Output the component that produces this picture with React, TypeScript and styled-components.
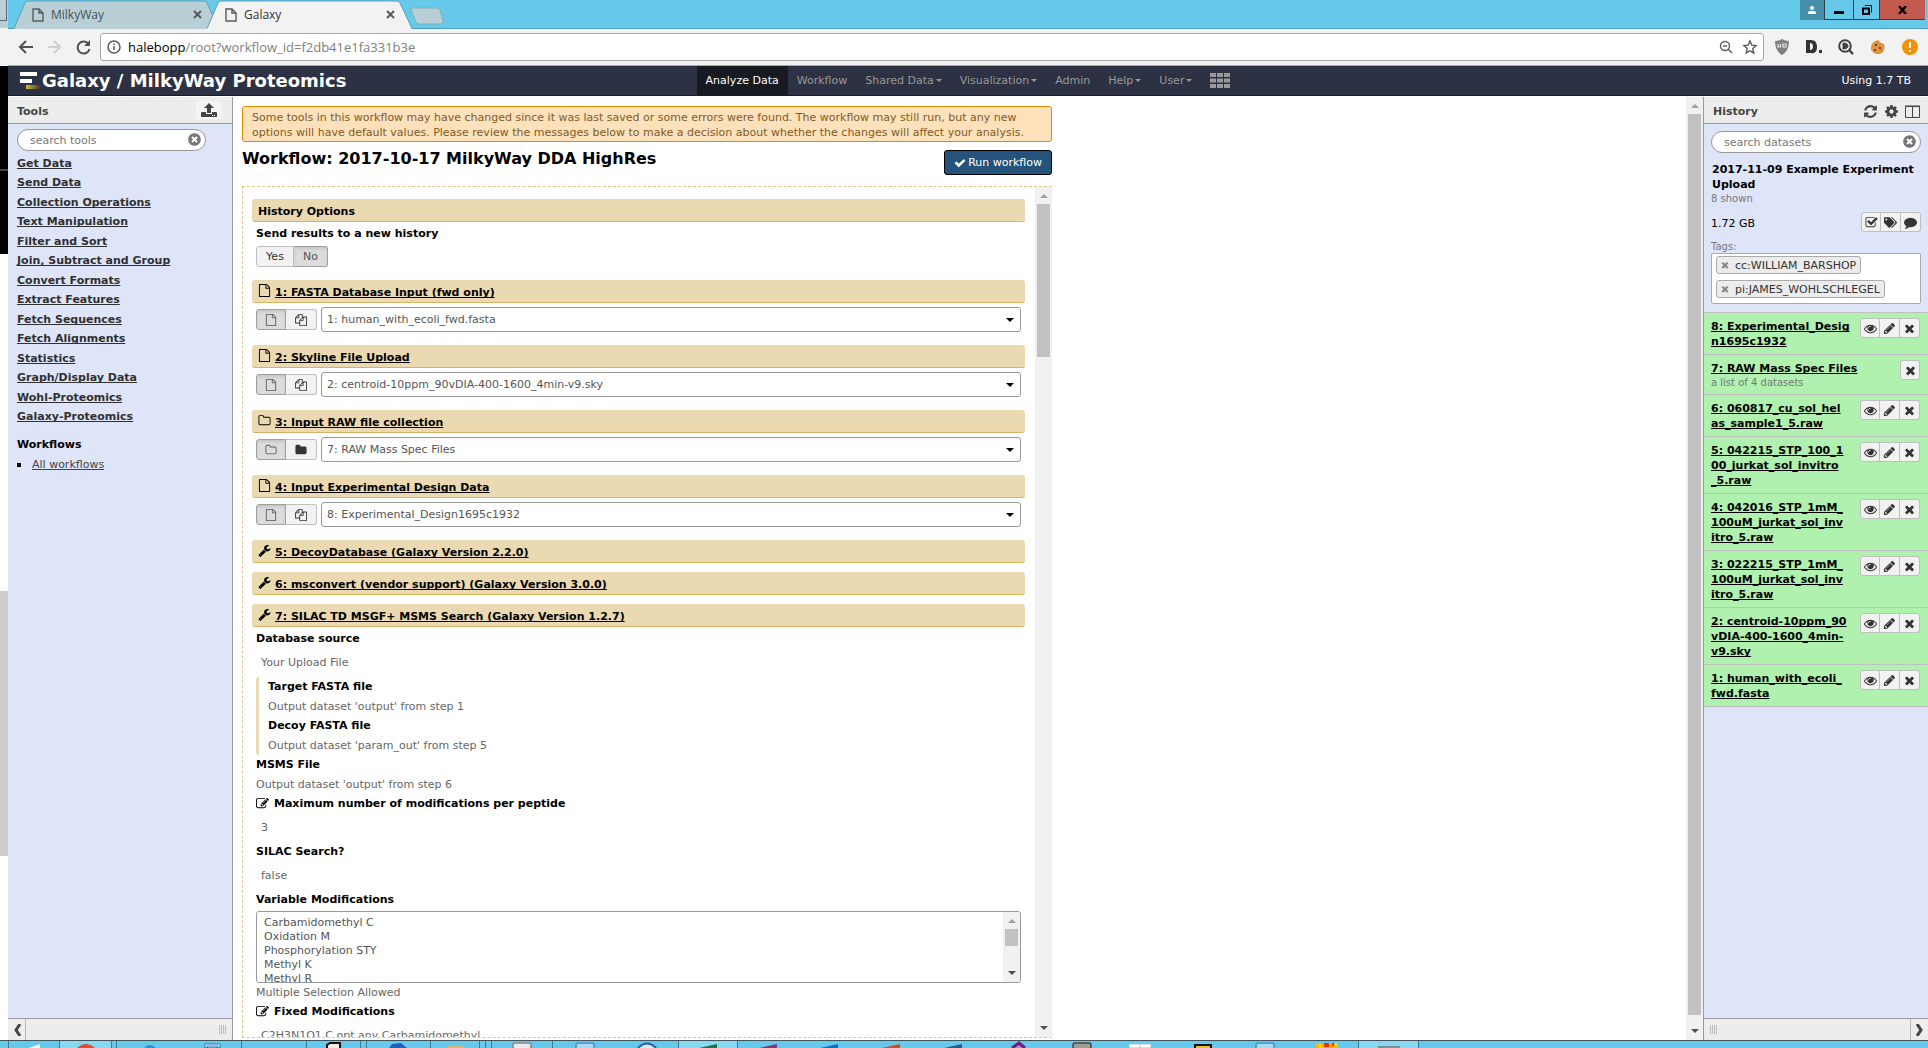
import React from "react";
import styled, { createGlobalStyle, css } from "styled-components";
import { FaTags, FaTimesCircle } from "react-icons/fa";

const GlobalStyle = createGlobalStyle`
  * { box-sizing: border-box; }
  body { margin: 0; overflow: hidden; background: #fff; }
  body, button, input, select {
    font-family: "DejaVu Sans", Verdana, sans-serif;
    font-size: 11px;
  }
  a { color: inherit; text-decoration-skip-ink: none; }
  svg { display: block; flex: none; }
  ul, h1, h2, h3, p { margin: 0; padding: 0; }
  ul { list-style: none; }
`;

/* ---------- icons ---------- */

const glyphs = {
  file: "M1596 380q28 28 48 76t20 88v1152q0 40-28 68t-68 28h-1344q-40 0-68-28t-28-68v-1600q0-40 28-68t68-28h896q40 0 88 20t76 48zm-444-244v376h376q-10-29-22-41l-313-313q-12-12-41-22zm384 1528v-1024h-416q-40 0-68-28t-28-68v-416h-768v1536h1280z",
  files: "M1696 384q40 0 68 28t28 68v1216q0 40-28 68t-68 28h-960q-40 0-68-28t-28-68v-288h-544q-40 0-68-28t-28-68v-672q0-40 20-88t48-76l408-408q28-28 76-48t88-20h416q40 0 68 28t28 68v328q68-40 128-40h416zm-544 213l-299 299h299v-299zm-640-384l-299 299h299v-299zm196 647l316-316v-416h-384v416q0 40-28 68t-68 28h-416v640h512v-256q0-40 20-88t48-76zm956 804v-1152h-384v416q0 40-28 68t-68 28h-416v640h896z",
  folderOpen: "M1600 1312v-704q0-40-28-68t-68-28h-704q-40 0-68-28t-28-68v-64q0-40-28-68t-68-28h-320q-40 0-68 28t-28 68v960q0 40 28 68t68 28h1216q40 0 68-28t28-68zm128-704v704q0 92-66 158t-158 66h-1216q-92 0-158-66t-66-158v-960q0-92 66-158t158-66h320q92 0 158 66t66 158v32h672q92 0 158 66t66 158z",
  folder: "M1728 608v704q0 92-66 158t-158 66h-1216q-92 0-158-66t-66-158v-960q0-92 66-158t158-66h320q92 0 158 66t66 158v32h672q92 0 158 66t66 158z",
  times: "M1490 1322q0 40-28 68l-136 136q-28 28-68 28t-68-28l-294-294-294 294q-28 28-68 28t-68-28l-136-136q-28-28-28-68t28-68l294-294-294-294q-28-28-28-68t28-68l136-136q28-28 68-28t68 28l294 294 294-294q28-28 68-28t68 28l136 136q28 28 28 68t-28 68l-294 294 294 294q28 28 28 68z",
  eye: "M1664 960q-152-236-381-353 61 104 61 225 0 185-131.5 316.5t-316.5 131.5-316.5-131.5-131.5-316.5q0-121 61-225-229 117-381 353 133 205 333.5 326.5t434.5 121.5 434.5-121.5 333.5-326.5zm-720-384q0-20-14-34t-34-14q-125 0-214.5 89.5t-89.5 214.5q0 20 14 34t34 14 34-14 14-34q0-86 61-147t147-61q20 0 34-14t14-34zm848 384q0 34-20 69-140 230-376.5 368.5t-499.5 138.5-499.5-139-376.5-368q-20-35-20-69t20-69q140-229 376.5-368t499.5-139 499.5 139 376.5 368q20 35 20 69z",
  pencil: "M491 1536l91-91-235-235-91 91v107h128v128h107zm523-928q0-22-22-22-10 0-17 7l-542 542q-7 7-7 17 0 22 22 22 10 0 17-7l542-542q7-7 7-17zm-54-192l416 416-832 832h-416v-416zm683 96q0 53-37 90l-166 166-416-416 166-165q36-38 90-38 53 0 91 38l235 234q37 39 37 91z",
  check: "M1671 566q0 40-28 68l-724 724-136 136q-28 28-68 28t-68-28l-136-136-362-362q-28-28-28-68t28-68l136-136q28-28 68-28t68 28l294 295 656-657q28-28 68-28t68 28l136 136q28 28 28 68z",
  wrench: "M448 1472q0-26-19-45t-45-19-45 19-19 45 19 45 45 19 45-19 19-45zm644-420l-682 682q-37 37-90 37-52 0-91-37l-106-108q-38-36-38-90 0-53 38-91l681-681q39 98 114.5 173.5t173.5 114.5zm634-435q0 39-23 106-47 134-164.5 217.5t-258.5 83.5q-185 0-316.5-131.5t-131.5-316.5 131.5-316.5 316.5-131.5q58 0 121.5 16.5t107.5 46.5q16 11 16 28t-16 28l-293 169v224l193 107q5-3 79-48.5t135.5-81 70.5-35.5q15 0 23.5 10t8.5 25z",
  cog: "M1152 896q0-106-75-181t-181-75-181 75-75 181 75 181 181 75 181-75 75-181zm512-109v222q0 12-8 23t-20 13l-185 28q-19 54-39 91 35 50 107 138 10 12 10 25t-9 23q-27 37-99 108t-94 71q-12 0-26-9l-138-108q-44 23-91 38-16 136-29 186-7 28-36 28h-222q-14 0-24.5-8.5t-11.5-21.5l-28-184q-49-16-90-37l-141 107q-10 9-25 9-14 0-25-11-126-114-165-168-7-10-7-23 0-12 8-23 15-21 51-66.5t54-70.5q-27-50-41-99l-183-27q-13-2-21-12.5t-8-23.5v-222q0-12 8-23t19-13l186-28q14-46 39-92-40-57-107-138-10-12-10-24 0-10 9-23 26-36 98.5-107.5t94.5-71.5q13 0 26 10l138 107q44-23 91-38 16-136 29-186 7-28 36-28h222q14 0 24.5 8.5t11.5 21.5l28 184q49 16 90 37l142-107q9-9 24-9 13 0 25 10 129 119 165 170 7 8 7 22 0 12-8 23-15 21-51 66.5t-54 70.5q26 50 41 98l183 28q13 2 21 12.5t8 23.5z",
  refresh: "M1639 1056q0 5-1 7-64 268-268 434.5t-478 166.5q-146 0-282.5-55t-243.5-157l-129 129q-19 19-45 19t-45-19-19-45v-448q0-26 19-45t45-19h448q26 0 45 19t19 45-19 45l-137 137q71 66 161 102t187 36q134 0 250-65t186-179q11-17 53-117 8-23 30-23h192q13 0 22.5 9.5t9.5 22.5zm25-800v448q0 26-19 45t-45 19h-448q-26 0-45-19t-19-45 19-45l138-138q-148-137-349-137-134 0-250 65t-186 179q-11 17-53 117-8 23-30 23h-199q-13 0-22.5-9.5t-9.5-22.5v-7q65-268 270-434.5t480-166.5q146 0 284 55.5t245 156.5l130-129q19-19 45-19t45 19 19 45z",
  comment: "M1792 896q0 174-120 321.5t-326 233-450 85.5q-70 0-145-8-198 175-460 242-49 14-114 22-17 2-30.5-9t-17.5-29v-1q-3-4-.5-12t2-10 4.5-9.5l6-9 7-8.5 8-9q7-8 31-34.5t34.5-38 31-39.5 32.5-51 27-59 26-76q-157-89-247.5-220t-90.5-281q0-130 71-248.5t191-204.5 286-136.5 348-50.5q244 0 450 85.5t326 233 120 321.5z",
  checkSquare: "M1472 930v318q0 119-84.5 203.5t-203.5 84.5h-832q-119 0-203.5-84.5t-84.5-203.5v-832q0-119 84.5-203.5t203.5-84.5h832q63 0 117 25 15 7 18 23 3 17-9 29l-49 49q-10 10-23 10-3 0-9-2-23-6-45-6h-832q-66 0-113 47t-47 113v832q0 66 47 113t113 47h832q66 0 113-47t47-113v-254q0-13 9-22l64-64q10-10 23-10 6 0 12 3 20 8 20 29zm231-489l-814 814q-24 24-57 24t-57-24l-430-430q-24-24-24-57t24-57l110-110q24-24 57-24t57 24l263 263 647-647q24-24 57-24t57 24l110 110q24 24 24 57t-24 57z",
  edit: "M888 1184l116-116-152-152-116 116v56h96v96h56zm440-720q-16-16-33 1l-350 350q-17 17-1 33t33-1l350-350q17-17 1-33zm80 594v190q0 119-84.5 203.5t-203.5 84.5h-832q-119 0-203.5-84.5t-84.5-203.5v-832q0-119 84.5-203.5t203.5-84.5h832q63 0 117 25 15 7 18 23 3 17-9 29l-49 49q-14 14-32 8-23-6-45-6h-832q-66 0-113 47t-47 113v832q0 66 47 113t113 47h832q66 0 113-47t47-113v-126q0-13 9-22l64-64q15-15 35-7t20 29zm-96-738l288 288-672 672h-288v-288zm444 132l-92 92-288-288 92-92q28-28 68-28t68 28l152 152q28 28 28 68t-28 68z",
};

type GlyphName = keyof typeof glyphs;

const Glyph = ({ name, size = 12 }: { name: GlyphName; size?: number }) => (
  <svg width={size} height={size} viewBox="0 0 1792 1792" fill="currentColor" aria-hidden>
    <path d={glyphs[name]} />
  </svg>
);

const Triangle = ({ down, color }: { down?: boolean; color: string }) => (
  <svg width="8" height="4" viewBox="0 0 8 4" aria-hidden>
    <path d={down ? "M0 0h8l-4 4z" : "M0 4h8l-4-4z"} fill={color} />
  </svg>
);

const PageIcon = () => (
  <svg width="12" height="14" viewBox="0 0 12 14" fill="none" stroke="#5a5a5a" strokeWidth="1.4" aria-hidden>
    <path d="M1 1h6l4 4v8H1zM7 1v4h4" />
  </svg>
);

const CloseIcon = () => (
  <svg width="9" height="9" viewBox="0 0 9 9" stroke="#555" strokeWidth="1.8" aria-hidden>
    <path d="M1 1l7 7M8 1L1 8" />
  </svg>
);

/* ---------- desktop ---------- */

const Screen = styled.div`
  display: flex;
  flex-direction: column;
  height: 100vh;
  overflow: hidden;
`;

const Desktop = styled.div`
  display: flex;
  flex: 1;
  min-height: 0;
`;

const BehindWindow = styled.div`
  display: flex;
  flex-direction: column;
  width: 8px;
  flex: none;
  background: #fff;
`;

const BehindBlock = styled.div<{ $h: number; $bg: string }>`
  flex: none;
  height: ${(p) => p.$h}px;
  background: ${(p) => p.$bg};
`;

const BehindTab = styled.div`
  flex: none;
  height: 28px;
  background: #b9cfd6;
  &::before {
    content: "";
    display: block;
    width: 6px;
    height: 20px;
    border: 1px solid #5b6a70;
    border-width: 0 1px 1px 0;
  }
`;

const Browser = styled.div`
  display: flex;
  flex-direction: column;
  flex: 1;
  min-width: 0;
`;

/* ---------- browser chrome ---------- */

const TabStrip = styled.div`
  display: flex;
  align-items: flex-start;
  flex: none;
  height: 29px;
  padding-left: 6px;
  background: #66c9e9;
  border-bottom: 1px solid #4f9cb8;
`;

const BrowserTab = styled.div<{ $active?: boolean }>`
  position: relative;
  z-index: ${(p) => (p.$active ? 1 : 0)};
  display: flex;
  align-items: center;
  width: 205px;
  height: 29px;
  margin-right: -12px;
  padding: 0 17px 0 18px;
  font-family: "Open Sans", sans-serif;
  font-size: 12px;
  color: ${(p) => (p.$active ? "#333" : "#41555c")};
  > svg { position: absolute; left: 0; top: 0; }
`;

const TabBody = styled.div`
  position: relative;
  display: flex;
  align-items: center;
  gap: 7px;
  flex: 1;
  button { margin-left: auto; }
`;

const PlainButton = styled.button`
  display: flex;
  align-items: center;
  justify-content: center;
  padding: 0;
  border: 0;
  background: none;
  color: #333;
`;

const NewTab = styled(PlainButton)`
  margin: 7px 0 0 10px;
`;

const WindowControls = styled.div`
  display: flex;
  margin-left: auto;
  padding-right: 3px;
`;

const WindowButton = styled(PlainButton)<{ $w: number; $bg?: string; $plain?: boolean }>`
  width: ${(p) => p.$w}px;
  height: 20px;
  background: ${(p) => p.$bg ?? "#66c9e9"};
  ${(p) =>
    !p.$plain &&
    css`
      border: 1px solid #27424c;
      border-width: 0 0 1px 1px;
    `}
`;

const Toolbar = styled.div`
  display: flex;
  align-items: center;
  flex: none;
  height: 37px;
  padding: 0 10px;
  background: #f2f2f2;
  border-bottom: 1px solid #a9a9a9;
`;

const NavButtons = styled.div`
  display: flex;
  gap: 14px;
  width: 82px;
`;

const AddressBar = styled.div`
  display: flex;
  align-items: center;
  flex: 1;
  height: 28px;
  padding: 0 5px 0 6px;
  gap: 7px;
  background: #fff;
  border: 1px solid #a9a9a9;
  border-radius: 3px;
  font-family: "Open Sans", sans-serif;
  font-size: 13px;
  line-height: 20px;
  color: #000;
  span { color: #808080; }
  p { flex: 1; }
`;

const Extensions = styled.div`
  display: flex;
  gap: 16px;
  padding-left: 10px;
`;

/* ---------- masthead ---------- */

const Masthead = styled.header`
  display: grid;
  grid-template-columns: 1fr auto 1fr;
  align-items: center;
  flex: none;
  height: 30px;
  margin-bottom: 1px;
  background: #2c3143;
  border-bottom: 1px solid #191b24;
  color: #fff;
`;

const Brand = styled.h1`
  display: flex;
  align-items: center;
  gap: 1px;
  padding-left: 11px;
  font-size: 18px;
  font-weight: bold;
  line-height: 28px;
`;

const MainNav = styled.nav`
  display: flex;
  align-self: stretch;
`;

const NavLink = styled.a<{ $active?: boolean }>`
  display: flex;
  align-items: center;
  gap: 2px;
  padding: 0 9px;
  text-decoration: none;
  color: ${(p) => (p.$active ? "#fff" : "#999")};
  background: ${(p) => (p.$active ? "#181a22" : "none")};
`;

const Quota = styled.div`
  padding-right: 17px;
  text-align: right;
`;

/* ---------- side panels ---------- */

const Workspace = styled.div`
  display: flex;
  flex: 1;
  min-height: 0;
`;

const SidePanel = styled.aside<{ $side: "left" | "right" }>`
  display: flex;
  flex-direction: column;
  flex: none;
  width: 225px;
  background: #dfe5f9;
  border-${(p) => (p.$side === "left" ? "right" : "left")}: 1px solid #999;
`;

const PanelHeader = styled.div`
  display: flex;
  align-items: center;
  justify-content: space-between;
  flex: none;
  height: 27px;
  padding: 3px 8px 0 9px;
  background: #ededed;
  border-bottom: 1px solid #999;
  color: #444;
  h2 { font-size: 11px; }
`;

const HeaderTools = styled.div`
  display: flex;
  gap: 6px;
  button { color: #444; }
`;

const UploadButton = styled(PlainButton)`
  width: 26px;
  height: 18px;
  margin: 0 2px 4px 0;
  background: #f4f4f4;
  border-radius: 3px;
`;

const PanelBody = styled.div`
  flex: 1;
  min-height: 0;
  overflow: hidden;
`;

const PanelFooter = styled.div<{ $side: "left" | "right" }>`
  display: flex;
  align-items: center;
  justify-content: space-between;
  flex-direction: ${(p) => (p.$side === "left" ? "row" : "row-reverse")};
  flex: none;
  height: 22px;
  background: #ededed;
  border-top: 1px solid #999;
`;

const CollapseButton = styled(PlainButton)<{ $side: "left" | "right" }>`
  width: 18px;
  align-self: stretch;
  border-${(p) => (p.$side === "left" ? "right" : "left")}: 1px solid #bbb;
`;

const Grip = styled.div`
  width: 7px;
  height: 9px;
  margin: 0 6px;
  border: 1px solid #bbb;
  border-width: 0 1px;
  background: linear-gradient(90deg, #ededed 1px, #bbb 1px 2px, #ededed 2px 3px, #bbb 3px 4px, #ededed 4px);
`;

const SearchBox = styled.div`
  position: relative;
  display: flex;
  input {
    width: 100%;
    height: 22px;
    padding: 0 12px;
    border: 1px solid #999;
    border-radius: 11px;
    background: #fff;
    outline: 0;
  }
  input::placeholder { color: #777; opacity: 1; }
  button {
    position: absolute;
    right: 5px;
    top: 4px;
    color: #777;
  }
`;

const ToolsBody = styled(PanelBody)`
  padding: 5px 26px 0 9px;
`;

const ToolList = styled.ul`
  padding-top: 3px;
  color: #303030;
  font-weight: bold;
  li { height: 20px; line-height: 20px; }
  li:nth-child(odd) { height: 19px; }
`;

const WorkflowHeading = styled.h3`
  margin-top: 8px;
  font-size: 11px;
  line-height: 20px;
`;

const WorkflowList = styled.ul`
  li {
    display: flex;
    align-items: center;
    gap: 11px;
    line-height: 20px;
    color: #444;
  }
  li::before {
    content: "";
    width: 4px;
    height: 4px;
    background: #000;
  }
`;

/* ---------- history ---------- */

const HistorySummary = styled.section`
  padding: 7px 7px 8px 7px;
  border-bottom: 1px solid #bfbfbf;
`;

const HistoryName = styled.h3`
  margin-top: 9px;
  padding-left: 1px;
  font-size: 11px;
  line-height: 15px;
`;

const SmallText = styled.div`
  font-size: 10px;
  line-height: 13px;
  color: #777;
`;

const SizeRow = styled.div`
  display: flex;
  align-items: flex-end;
  justify-content: space-between;
  margin: 7px 0 8px;
  line-height: 17px;
`;

const ButtonGroup = styled.div`
  display: flex;
  flex: none;
  align-self: flex-start;
  button + button { border-left-width: 0; }
  button:first-child { border-radius: 3px 0 0 3px; }
  button:last-child { border-radius: 0 3px 3px 0; }
  button:only-child { border-radius: 3px; }
`;

const SmallButton = styled(PlainButton)`
  width: 20px;
  height: 20px;
  background: #f2f2f2;
  border: 1px solid #bfbfbf;
`;

const TagBox = styled.div`
  display: flex;
  flex-direction: column;
  align-items: flex-start;
  gap: 6px;
  height: 51px;
  padding: 2px 4px;
  background: #fff;
  border: 1px solid #aaa;
  border-radius: 2px;
`;

const Tag = styled.span`
  display: flex;
  align-items: center;
  gap: 5px;
  height: 18px;
  padding: 0 4px 0 3px;
  border: 1px solid #aaa;
  border-radius: 3px;
  background: #ececec;
  color: #333;
  button { color: #888; }
`;

const Dataset = styled.li`
  display: flex;
  justify-content: space-between;
  padding: 5px 8px 5px 7px;
  background: #b0f1b0;
  border-bottom: 1px solid #bfbfbf;
`;

const DatasetTitle = styled.div`
  padding-top: 1px;
  line-height: 15px;
  white-space: nowrap;
  a { font-weight: bold; color: #000; }
`;

/* ---------- centre ---------- */

const Center = styled.main`
  display: flex;
  flex: 1;
  min-width: 0;
`;

const CenterPane = styled.div`
  display: flex;
  flex-direction: column;
  flex: 1;
  min-width: 0;
  padding: 9px 9px 2px;
`;

const ScrollTrack = styled.div`
  display: flex;
  flex-direction: column;
  align-items: center;
  flex: none;
  width: 17px;
  padding: 7px 0;
  background: #f1f1f1;
`;

const Thumb = styled.div<{ $size?: number }>`
  width: 13px;
  margin: 6px 0 auto;
  background: #c1c1c1;
  ${(p) => (p.$size ? `height: ${p.$size}px;` : "flex: 1; margin-bottom: 14px;")}
`;

const Warning = styled.div`
  width: 810px;
  max-width: 100%;
  height: 36px;
  padding: 3px 9px;
  background: #fde1ba;
  border: 1px solid #e18700;
  border-radius: 3px;
  color: #7d5b29;
  line-height: 15px;
`;

const TitleRow = styled.div`
  display: flex;
  justify-content: space-between;
  width: 810px;
  max-width: 100%;
  padding: 8px 0 11px;
  h2 { font-size: 16px; line-height: 18px; }
`;

const RunButton = styled.button`
  display: flex;
  align-items: center;
  gap: 2px;
  height: 25px;
  padding: 0 9px;
  background: #25537b;
  border: 1px solid #000;
  border-radius: 3px;
  color: #fff;
`;

const FormFrame = styled.form`
  display: flex;
  flex: 1;
  min-height: 0;
  width: 810px;
  max-width: 100%;
  border: 1px dashed #e0c98f;
  border-right: 0;
`;

const FormBody = styled.div`
  flex: 1;
  min-width: 0;
  overflow: hidden;
  padding: 12px 10px 0 9px;
`;

const StepTitle = styled.h3`
  display: flex;
  align-items: center;
  gap: 4px;
  height: 23px;
  padding: 2px 6px 0;
  background: #ebd9b2;
  border-bottom: 1px solid #d8b365;
  border-radius: 3px;
  font-size: 11px;
  svg { margin-top: -3px; }
`;

const Step = styled.section<{ $gap: number }>`
  margin-bottom: ${(p) => p.$gap}px;
`;

const Fields = styled.div`
  padding: 2px 4px 0;
`;

const FieldLabel = styled.label`
  display: flex;
  align-items: center;
  gap: 5px;
  height: 20px;
  padding-bottom: 2px;
  font-weight: bold;
`;

const FieldText = styled.div<{ $boxed?: boolean }>`
  height: ${(p) => (p.$boxed ? 28 : 19)}px;
  line-height: ${(p) => (p.$boxed ? 28 : 19)}px;
  padding-left: ${(p) => (p.$boxed ? 5 : 0)}px;
  color: #666;
`;

const Nested = styled.div`
  height: 78px;
  padding-left: 9px;
  border-left: 3px solid #ebd9b2;
  border-radius: 3px;
`;

const ToggleButton = styled.button<{ $on?: boolean; $w: number }>`
  display: flex;
  align-items: center;
  justify-content: center;
  width: ${(p) => p.$w}px;
  height: 21px;
  padding: 0;
  border: 1px solid ${(p) => (p.$on ? "#a0a0a0" : "#bfbfbf")};
  background: ${(p) => (p.$on ? "#dcdcdc" : "#f2f2f2")};
  box-shadow: ${(p) => (p.$on ? "inset 0 2px 3px #c6c6c6" : "none")};
  color: ${(p) => (p.$on ? "#555" : "#333")};
`;

const ToggleRow = styled.div`
  display: flex;
  padding-top: 2px;
`;

const InputRow = styled.div`
  display: flex;
  align-items: center;
  gap: 4px;
  padding: 4px 4px 0;
  ${ButtonGroup} { align-self: center; }
`;

const SelectWrap = styled.div`
  position: relative;
  flex: 1;
  select {
    display: block;
    appearance: none;
    width: 100%;
    height: 25px;
    padding: 0 5px;
    border: 1px solid #999;
    border-radius: 3px;
    background: #fff;
    color: #555;
  }
  svg { position: absolute; right: 7px; top: 11px; }
`;

const MultiWrap = styled.div`
  display: flex;
  height: 72px;
  margin-top: 1px;
  border: 1px solid #999;
  border-radius: 3px;
  overflow: hidden;
  select {
    flex: 1;
    height: 70px;
    padding: 4px 7px 0;
    border: 0;
    outline: 0;
    overflow: hidden;
    background: #fff;
    color: #555;
    scrollbar-width: none;
  }
  option {
    height: 14px;
    min-height: 14px;
    padding: 0;
    line-height: 14px;
  }
`;

/* ---------- taskbar ---------- */

const Taskbar = styled.footer`
  display: flex;
  flex: none;
  height: 8px;
  overflow: hidden;
  background: #66c9e9;
  border-top: 1px solid #3c5660;
`;

const TaskItem = styled.div<{ $w: number; $lit?: boolean; $edge?: boolean }>`
  display: flex;
  justify-content: center;
  flex: none;
  width: ${(p) => p.$w}px;
  height: 7px;
  background: ${(p) => (p.$lit ? "#8ad8ef" : "none")};
  border-right: ${(p) => (p.$edge ? "1px solid #3d7c92" : "0")};
`;

type Task = { w: number; lit?: boolean; edge?: boolean; art?: React.ReactNode };

const peak = (color: string) => <path d="M2 7L20 3v4z" fill={color} />;
const cap = (fill: string, stroke: string) => (
  <path d="M2 7V4q0-2 2-2h14q2 0 2 2v3" fill={fill} stroke={stroke} strokeWidth="1.5" />
);

const tasks: Task[] = [
  { w: 9, edge: true },
  { w: 51, edge: true, art: <path d="M6 7L17 3v4z" fill="#f4fbfd" /> },
  { w: 52, lit: true, edge: true, art: <path d="M2 7q9-8 18 0z" fill="#e0483a" /> },
  { w: 5, edge: true },
  { w: 66, art: <path d="M5 7q6-6 12 0z" fill="#2e8fd0" /> },
  { w: 59, edge: true, art: <path d="M4 3h15v4H4zM6 5h11v2H6z" fill="#fff" stroke="#1173c0" /> },
  { w: 65, edge: true },
  { w: 54, edge: true, art: <path d="M4 7V4l3-2h10v5" fill="#eee" stroke="#111" strokeWidth="2" /> },
  { w: 6, edge: true },
  { w: 64, edge: true, art: <path d="M1 7l3-4 9-1 6 5z" fill="#1e5fc0" /> },
  { w: 49, edge: true, art: <path d="M3 7V5h16v2z" fill="#d8b878" /> },
  { w: 6, edge: true },
  { w: 6, edge: true },
  { w: 61, edge: true, art: cap("#e9e9e9", "#888") },
  { w: 63, art: cap("#a8d8f4", "#4a90c8") },
  { w: 63, edge: true, art: <path d="M2 7q9-9 18 0" fill="#d8ecf8" stroke="#2860a8" strokeWidth="2" /> },
  { w: 59, lit: true, edge: true, art: peak("#1e7145") },
  { w: 60, art: peak("#80397b") },
  { w: 61, art: peak("#0f6fc6") },
  { w: 63, art: peak("#d24726") },
  { w: 62, art: peak("#2b579a") },
  { w: 70, art: <path d="M4 7l7-5 6 5" fill="#b58ac4" stroke="#68217a" strokeWidth="3" /> },
  { w: 55, art: cap("#a09c94", "#444") },
  { w: 62, art: <path d="M0 3h22v4H0zM11 4v3" fill="#fff" stroke="#bbb" /> },
  { w: 64, art: <path d="M3 7V4h16v3" fill="#e8c020" stroke="#111" strokeWidth="2" /> },
  { w: 60, art: cap("#a8d8f4", "#4a90c8") },
  {
    w: 64,
    edge: true,
    art: (
      <>
        <path d="M0 2h22v5H0z" fill="#ffb000" />
        <path d="M8 2h5v4H8zM16 2h2v3h-2z" fill="#f03000" />
        <path d="M3 3h2v4H3zM19 2h2v3h-2z" fill="#ffe800" />
      </>
    ),
  },
  { w: 60, lit: true, edge: true, art: <path d="M0 5h22v2H0z" fill="#7a8d94" /> },
];

/* ---------- data ---------- */

const toolSections = [
  "Get Data", "Send Data", "Collection Operations", "Text Manipulation", "Filter and Sort",
  "Join, Subtract and Group", "Convert Formats", "Extract Features", "Fetch Sequences",
  "Fetch Alignments", "Statistics", "Graph/Display Data", "Wohl-Proteomics", "Galaxy-Proteomics",
];

const inputs: { title: string; value: string; single: GlyphName; many: GlyphName }[] = [
  { title: "1: FASTA Database Input (fwd only)", value: "1: human_with_ecoli_fwd.fasta", single: "file", many: "files" },
  { title: "2: Skyline File Upload", value: "2: centroid-10ppm_90vDIA-400-1600_4min-v9.sky", single: "file", many: "files" },
  { title: "3: Input RAW file collection", value: "7: RAW Mass Spec Files", single: "folderOpen", many: "folder" },
  { title: "4: Input Experimental Design Data", value: "8: Experimental_Design1695c1932", single: "file", many: "files" },
];

const datasets: { lines: string[]; note?: string }[] = [
  { lines: ["8: Experimental_Desig", "n1695c1932"] },
  { lines: ["7: RAW Mass Spec Files"], note: "a list of 4 datasets" },
  { lines: ["6: 060817_cu_sol_hel", "as_sample1_5.raw"] },
  { lines: ["5: 042215_STP_100_1", "00_jurkat_sol_invitro", "_5.raw"] },
  { lines: ["4: 042016_STP_1mM_", "100uM_jurkat_sol_inv", "itro_5.raw"] },
  { lines: ["3: 022215_STP_1mM_", "100uM_jurkat_sol_inv", "itro_5.raw"] },
  { lines: ["2: centroid-10ppm_90", "vDIA-400-1600_4min-", "v9.sky"] },
  { lines: ["1: human_with_ecoli_", "fwd.fasta"] },
];

const menu = [
  { label: "Analyze Data", active: true },
  { label: "Workflow" },
  { label: "Shared Data", caret: true },
  { label: "Visualization", caret: true },
  { label: "Admin" },
  { label: "Help", caret: true },
  { label: "User", caret: true },
];

/* ---------- pieces ---------- */

const ChromeTab = ({ title, active }: { title: string; active?: boolean }) => (
  <BrowserTab $active={active}>
    <svg width="205" height="29" viewBox="0 0 205 29" aria-hidden>
      <path d="M0 29L11 3q1-2 4-2h174q3 0 4 2l12 26z" fill={active ? "#f2f2f2" : "#b9cfd6"} />
      <path d="M0 28.5L11 3q1-2 4-2h174q3 0 4 2l12 25.500" fill="none" stroke="#5a9fb8" />
    </svg>
    <TabBody>
      <PageIcon />
      {title}
      <PlainButton aria-label={`Close ${title}`}><CloseIcon /></PlainButton>
    </TabBody>
  </BrowserTab>
);

const BrowserChrome = () => (
  <>
    <TabStrip>
      <ChromeTab title="MilkyWay" />
      <ChromeTab title="Galaxy" active />
      <NewTab aria-label="New tab">
        <svg width="34" height="18" viewBox="0 0 34 18">
          <path d="M1 1h26q2 0 3 2l3 11q1 3-2 3H9q-2 0-3-2L1 3z" fill="#b9cfd6" stroke="#7fb0c0" />
        </svg>
      </NewTab>
      <WindowControls>
        <WindowButton $w={24} $bg="#468fa8" $plain aria-label="Profile">
          <svg width="8" height="8" viewBox="0 0 8 8" fill="#fff"><circle cx="4" cy="2" r="2" /><path d="M0 8V7q0-2 2-2h4q2 0 2 2v1z" /></svg>
        </WindowButton>
        <WindowButton $w={29} aria-label="Minimize">
          <svg width="10" height="8" viewBox="0 0 10 8"><path d="M0 5h10v3H0z" /></svg>
        </WindowButton>
        <WindowButton $w={26} aria-label="Restore">
          <svg width="10" height="10" viewBox="0 0 10 10" fill="none" stroke="#000">
            <path d="M1 3.500h6v5.500H1z" strokeWidth="2" /><path d="M3 .5h6.500v7" />
          </svg>
        </WindowButton>
        <WindowButton $w={46} $bg="#c35a50" aria-label="Close window">
          <svg width="9" height="8" viewBox="0 0 9 8" stroke="#000" strokeWidth="2.400"><path d="M1 0l7 8M8 0L1 8" /></svg>
        </WindowButton>
      </WindowControls>
    </TabStrip>
    <Toolbar>
      <NavButtons>
        <PlainButton aria-label="Back">
          <svg width="16" height="14" viewBox="0 0 16 14" fill="none" stroke="#505050" strokeWidth="2"><path d="M15 7H2M8 1L2 7l6 6" /></svg>
        </PlainButton>
        <PlainButton aria-label="Forward">
          <svg width="14" height="14" viewBox="0 0 14 14" fill="none" stroke="#d0d0d0" strokeWidth="2"><path d="M0 7h12M6 1l6 6-6 6" /></svg>
        </PlainButton>
        <PlainButton aria-label="Reload">
          <svg width="15" height="15" viewBox="0 0 15 15" fill="none" stroke="#505050" strokeWidth="2">
            <path d="M12.500 4A6 6 0 1 0 13.500 9" /><path d="M14 0v6H8z" fill="#505050" stroke="none" />
          </svg>
        </PlainButton>
      </NavButtons>
      <AddressBar>
        <svg width="14" height="14" viewBox="0 0 14 14" fill="none" stroke="#5a5a5a" strokeWidth="1.500">
          <circle cx="7" cy="7" r="6" /><path d="M7 6v4M7 3.500V5" />
        </svg>
        <p>halebopp<span>/root?workflow_id=f2db41e1fa331b3e</span></p>
        <PlainButton aria-label="Zoom">
          <svg width="14" height="14" viewBox="0 0 14 14" fill="none" stroke="#606060" strokeWidth="1.500">
            <circle cx="6" cy="6" r="4.500" /><path d="M9 9l4 4M4 6h4" />
          </svg>
        </PlainButton>
        <PlainButton aria-label="Bookmark">
          <svg width="18" height="16" viewBox="0 0 18 16" fill="none" stroke="#555" strokeWidth="1.400">
            <path d="M10 2l1.800 4.200 4.200.4-3.200 3 1 4.400L10 11.700 6.200 14l1-4.400-3.200-3 4.200-.4z" />
          </svg>
        </PlainButton>
      </AddressBar>
      <Extensions>
        <PlainButton aria-label="Shield">
          <svg width="16" height="16" viewBox="0 0 16 16">
            <path d="M8 0q3 2 7 2 0 10-7 14Q1 12 1 2q4 0 7-2z" fill="#808080" />
            <path d="M4 5v3h2.500V5M9 5h3v3H9z" fill="none" stroke="#e8e8e8" strokeWidth="1.200" />
          </svg>
        </PlainButton>
        <PlainButton aria-label="Disconnect">
          <svg width="16" height="14" viewBox="0 0 16 14" fill="#333">
            <path fillRule="evenodd" d="M0 0h5q6 0 6 7t-6 6H0zM4 3v7q3 0 3-3.500T4 3z" /><path d="M13 10h3v3h-3z" />
          </svg>
        </PlainButton>
        <PlainButton aria-label="Lookup">
          <svg width="16" height="16" viewBox="0 0 16 16" fill="none" stroke="#404040">
            <circle cx="7" cy="7" r="5.800" strokeWidth="2" /><path d="M11 11l4 4" strokeWidth="2.400" /><path d="M5 4q5 0 5 3t-5 3z" fill="#404040" />
          </svg>
        </PlainButton>
        <PlainButton aria-label="Cookies">
          <svg width="16" height="16" viewBox="0 0 16 16">
            <path d="M8 1q2 3 6 4 2 6-3 9.500-7 2-10-4Q0 3 8 1z" fill="#dd9440" />
            <path d="M5 5h2v2H5zM9 8h2v2H9zM4 10h2v2H4zM11 11h1v1h-1z" fill="#7a4010" />
          </svg>
        </PlainButton>
        <PlainButton aria-label="Update">
          <svg width="16" height="16" viewBox="0 0 16 16"><circle cx="8" cy="8" r="8" fill="#f39200" /><path d="M7 3h2v6H7zM7 11h2v2H7z" fill="#fff" /></svg>
        </PlainButton>
      </Extensions>
    </Toolbar>
  </>
);

const GalaxyLogo = () => (
  <svg width="22" height="18" viewBox="0 0 22 18" aria-hidden>
    <defs>
      <linearGradient id="tail"><stop offset="0" stopColor="#d8c020" /><stop offset="1" stopColor="#2c3143" /></linearGradient>
    </defs>
    <path d="M1 0h17v4H1zM1 7h12v4H1z" fill="#fff" />
    <path d="M7 13h15v4H7z" fill="url(#tail)" />
  </svg>
);

const Scrollbar = ({ size }: { size?: number }) => (
  <ScrollTrack>
    <Triangle color="#a0a0a0" />
    <Thumb $size={size} />
    <Triangle down color="#505050" />
  </ScrollTrack>
);

const ToolsPanel = () => (
  <SidePanel $side="left">
    <PanelHeader>
      <h2>Tools</h2>
      <UploadButton aria-label="Upload file">
        <svg width="16" height="14" viewBox="0 0 16 14" fill="#444">
          <path d="M8 0l5 5H10v5H6V5H3zM1 9h4v2h6V9h4q1 0 1 1v4H0v-4q0-1 1-1z" /><path d="M11 12h1v1h-1zM13 12h1v1h-1z" fill="#fff" />
        </svg>
      </UploadButton>
    </PanelHeader>
    <ToolsBody>
      <SearchBox>
        <input type="text" placeholder="search tools" aria-label="search tools" />
        <PlainButton aria-label="Clear tool search"><FaTimesCircle size={13} /></PlainButton>
      </SearchBox>
      <ToolList>
        {toolSections.map((name) => (
          <li key={name}><a href="#tools">{name}</a></li>
        ))}
      </ToolList>
      <WorkflowHeading>Workflows</WorkflowHeading>
      <WorkflowList><li><a href="#workflows">All workflows</a></li></WorkflowList>
    </ToolsBody>
    <PanelFooter $side="left">
      <CollapseButton $side="left" aria-label="Collapse tools">
        <svg width="8" height="12" viewBox="0 0 8 12" fill="none" stroke="#444" strokeWidth="3"><path d="M7 0L3 6l4 6" /></svg>
      </CollapseButton>
      <Grip />
    </PanelFooter>
  </SidePanel>
);

const HistoryPanel = () => (
  <SidePanel $side="right">
    <PanelHeader>
      <h2>History</h2>
      <HeaderTools>
        <PlainButton aria-label="Refresh history"><Glyph name="refresh" size={15} /></PlainButton>
        <PlainButton aria-label="History options"><Glyph name="cog" size={15} /></PlainButton>
        <PlainButton aria-label="View all histories">
          <svg width="15" height="14" viewBox="0 0 15 14" fill="none" stroke="#444"><path d="M.5 1.500h14v11H.5zM7.500 2v10M0 1h15" /></svg>
        </PlainButton>
      </HeaderTools>
    </PanelHeader>
    <PanelBody>
      <HistorySummary>
        <SearchBox>
          <input type="text" placeholder="search datasets" aria-label="search datasets" />
          <PlainButton aria-label="Clear dataset search"><FaTimesCircle size={13} /></PlainButton>
        </SearchBox>
        <HistoryName>2017-11-09 Example Experiment Upload</HistoryName>
        <SmallText>8 shown</SmallText>
        <SizeRow>
          1.72 GB
          <ButtonGroup>
            <SmallButton aria-label="Select datasets"><Glyph name="checkSquare" size={13} /></SmallButton>
            <SmallButton aria-label="Edit tags"><FaTags size={13} /></SmallButton>
            <SmallButton aria-label="Edit annotation"><Glyph name="comment" size={13} /></SmallButton>
          </ButtonGroup>
        </SizeRow>
        <SmallText>Tags:</SmallText>
        <TagBox>
          {["cc:WILLIAM_BARSHOP", "pi:JAMES_WOHLSCHLEGEL"].map((tag) => (
            <Tag key={tag}>
              <PlainButton aria-label={`Remove ${tag}`}><Glyph name="times" size={10} /></PlainButton>
              {tag}
            </Tag>
          ))}
        </TagBox>
      </HistorySummary>
      <ul>
        {datasets.map(({ lines, note }) => (
          <Dataset key={lines[0]}>
            <DatasetTitle>
              <a href="#dataset">
                {lines.map((line, i) => (
                  <React.Fragment key={line}>{i > 0 && <br />}{line}</React.Fragment>
                ))}
              </a>
              {note && <SmallText>{note}</SmallText>}
            </DatasetTitle>
            <ButtonGroup>
              {!note && <SmallButton aria-label="View data"><Glyph name="eye" size={13} /></SmallButton>}
              {!note && <SmallButton aria-label="Edit attributes"><Glyph name="pencil" size={13} /></SmallButton>}
              <SmallButton aria-label="Delete"><Glyph name="times" size={13} /></SmallButton>
            </ButtonGroup>
          </Dataset>
        ))}
      </ul>
    </PanelBody>
    <PanelFooter $side="right">
      <CollapseButton $side="right" aria-label="Collapse history">
        <svg width="8" height="12" viewBox="0 0 8 12" fill="none" stroke="#444" strokeWidth="3"><path d="M1 0l4 6-4 6" /></svg>
      </CollapseButton>
      <Grip />
    </PanelFooter>
  </SidePanel>
);

const ToolStep = ({ title, gap = 9, children }: { title: string; gap?: number; children?: React.ReactNode }) => (
  <Step $gap={gap}>
    <StepTitle><Glyph name="wrench" size={13} /><a href="#step">{title}</a></StepTitle>
    {children}
  </Step>
);

const WorkflowForm = () => (
  <FormFrame onSubmit={(e) => e.preventDefault()}>
    <FormBody>
      <Step $gap={13}>
        <StepTitle>History Options</StepTitle>
        <Fields>
          <FieldLabel as="div">Send results to a new history</FieldLabel>
          <ToggleRow>
            <ButtonGroup>
              <ToggleButton type="button" $w={38}>Yes</ToggleButton>
              <ToggleButton type="button" $w={34} $on>No</ToggleButton>
            </ButtonGroup>
          </ToggleRow>
        </Fields>
      </Step>
      {inputs.map((input) => (
        <Step key={input.title} $gap={13}>
          <StepTitle><Glyph name={input.single} size={13} /><a href="#step">{input.title}</a></StepTitle>
          <InputRow>
            <ButtonGroup>
              <ToggleButton type="button" $w={30} $on aria-label="Single dataset"><Glyph name={input.single} size={12} /></ToggleButton>
              <ToggleButton type="button" $w={31} aria-label="Multiple datasets"><Glyph name={input.many} size={12} /></ToggleButton>
            </ButtonGroup>
            <SelectWrap>
              <select aria-label={input.title}><option>{input.value}</option></select>
              <Triangle down color="#000" />
            </SelectWrap>
          </InputRow>
        </Step>
      ))}
      <ToolStep title="5: DecoyDatabase (Galaxy Version 2.2.0)" />
      <ToolStep title="6: msconvert (vendor support) (Galaxy Version 3.0.0)" />
      <ToolStep title="7: SILAC TD MSGF+ MSMS Search (Galaxy Version 1.2.7)">
        <Fields>
          <FieldLabel as="div">Database source</FieldLabel>
          <FieldText $boxed>Your Upload File</FieldText>
          <Nested>
            <FieldLabel as="div">Target FASTA file</FieldLabel>
            <FieldText>Output dataset 'output' from step 1</FieldText>
            <FieldLabel as="div">Decoy FASTA file</FieldLabel>
            <FieldText>Output dataset 'param_out' from step 5</FieldText>
          </Nested>
          <FieldLabel as="div">MSMS File</FieldLabel>
          <FieldText>Output dataset 'output' from step 6</FieldText>
          <FieldLabel as="div"><Glyph name="edit" size={13} />Maximum number of modifications per peptide</FieldLabel>
          <FieldText $boxed>3</FieldText>
          <FieldLabel as="div">SILAC Search?</FieldLabel>
          <FieldText $boxed>false</FieldText>
          <FieldLabel htmlFor="variable-mods">Variable Modifications</FieldLabel>
          <MultiWrap>
            <select id="variable-mods" multiple>
              <option>Carbamidomethyl C</option>
              <option>Oxidation M</option>
              <option>Phosphorylation STY</option>
              <option>Methyl K</option>
              <option>Methyl R</option>
            </select>
            <Scrollbar size={17} />
          </MultiWrap>
          <FieldText>Multiple Selection Allowed</FieldText>
          <FieldLabel as="div"><Glyph name="edit" size={13} />Fixed Modifications</FieldLabel>
          <FieldText $boxed>C2H3N1O1 C opt any Carbamidomethyl</FieldText>
        </Fields>
      </ToolStep>
    </FormBody>
    <Scrollbar size={153} />
  </FormFrame>
);

export default function App() {
  return (
    <Screen>
      <GlobalStyle />
      <Desktop>
        <BehindWindow>
          <BehindTab />
          <BehindBlock $h={38} $bg="#f2f2f2" />
          <BehindBlock $h={103} $bg="#000" />
          <BehindBlock $h={2} $bg="#444" />
          <BehindBlock $h={83} $bg="#000" />
          <BehindBlock $h={337} $bg="#fff" />
          <BehindBlock $h={265} $bg="#cdcdcd" />
        </BehindWindow>
        <Browser>
          <BrowserChrome />
          <Masthead>
            <Brand><GalaxyLogo />Galaxy / MilkyWay Proteomics</Brand>
            <MainNav>
              {menu.map(({ label, active, caret }) => (
                <NavLink key={label} href="#menu" $active={active}>
                  {label}
                  {caret && <svg width="6" height="3" viewBox="0 0 6 3"><path d="M0 0h6l-3 3z" fill="#999" /></svg>}
                </NavLink>
              ))}
              <NavLink href="#apps" aria-label="Apps">
                <svg width="20" height="15" viewBox="0 0 20 15" fill="#999">
                  <path d="M0 0h6v4H0zM7 0h6v4H7zM14 0h6v4h-6zM0 5.500h6v4H0zM7 5.500h6v4H7zM14 5.500h6v4h-6zM0 11h6v4H0zM7 11h6v4H7zM14 11h6v4h-6z" />
                </svg>
              </NavLink>
            </MainNav>
            <Quota>Using 1.7 TB</Quota>
          </Masthead>
          <Workspace>
            <ToolsPanel />
            <Center>
              <CenterPane>
                <Warning>
                  Some tools in this workflow may have changed since it was last saved or some errors were found. The workflow may still run, but any new options will have default values. Please review the messages below to make a decision about whether the changes will affect your analysis.
                </Warning>
                <TitleRow>
                  <h2>Workflow: 2017-10-17 MilkyWay DDA HighRes</h2>
                  <RunButton type="button"><Glyph name="check" size={12} />Run workflow</RunButton>
                </TitleRow>
                <WorkflowForm />
              </CenterPane>
              <Scrollbar />
            </Center>
            <HistoryPanel />
          </Workspace>
        </Browser>
      </Desktop>
      <Taskbar>
        {tasks.map((task, i) => (
          <TaskItem key={i} $w={task.w} $lit={task.lit} $edge={task.edge}>
            {task.art && <svg width="22" height="7" viewBox="0 0 22 7">{task.art}</svg>}
          </TaskItem>
        ))}
      </Taskbar>
    </Screen>
  );
}
